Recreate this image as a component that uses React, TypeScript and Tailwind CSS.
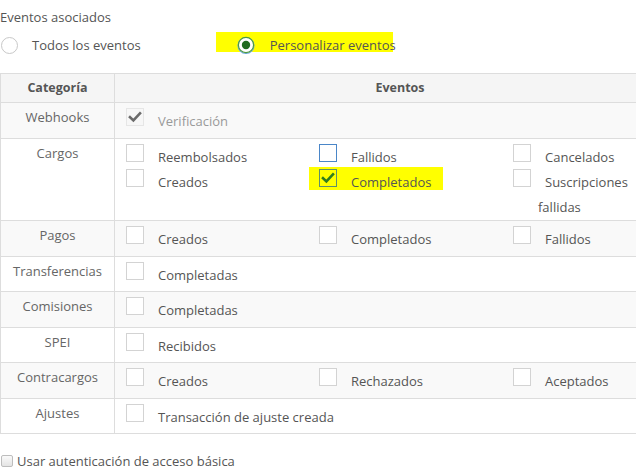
import React from 'react';

type Item = { label: string; state?: 'off' | 'on' | 'disabled' | 'hover'; mark?: boolean };

const Check = ({ color }: { color: string }) => (
  <svg width="14" height="14" viewBox="0 0 14 14" className="block">
    <path d="M2 7.2 L5.4 10.4 L12 3.4" fill="none" stroke={color} strokeWidth="2.6" strokeLinecap="square" />
  </svg>
);

const Box = ({ state = 'off' }: { state?: Item['state'] }) => {
  if (state === 'disabled') {
    return (
      <span className="w-[18px] h-[18px] shrink-0 border border-[#e6e6e6] bg-[#f7f7f7] flex items-center justify-center">
        <Check color="#6b6b6b" />
      </span>
    );
  }
  if (state === 'on') {
    return (
      <span className="w-[18px] h-[18px] shrink-0 border border-[#5f8f6a] flex items-center justify-center">
        <Check color="#2f7d1e" />
      </span>
    );
  }
  return (
    <span
      className={`w-[18px] h-[18px] shrink-0 border bg-white ${
        state === 'hover' ? 'border-[#4a86c8]' : 'border-[#d3d3d3]'
      }`}
    ></span>
  );
};

const Option = ({ item }: { item: Item }) => {
  const box = (
    <>
      <Box state={item.state} />
      <span
        className={`ml-[14px] mt-[3px] leading-[20px] whitespace-nowrap ${
          item.state === 'disabled' ? 'text-[#9a9a9a]' : 'text-[#555]'
        }`}
      >
        {item.label}
      </span>
    </>
  );
  if (item.mark) {
    return (
      <div className="h-[25px]">
        <div className="flex items-start bg-[#ffff00] w-[134px] -ml-[10px] pl-[10px] -mt-[2px] pt-[2px] h-[23px]">{box}</div>
      </div>
    );
  }
  return <div className="flex items-start h-[25px]">{box}</div>;
};

const rows: { cat: string; items: Item[] }[] = [
  { cat: 'Webhooks', items: [{ label: 'Verificación', state: 'disabled' }] },
  { cat: 'Pagos', items: [{ label: 'Creados' }, { label: 'Completados' }, { label: 'Fallidos' }] },
  { cat: 'Transferencias', items: [{ label: 'Completadas' }] },
  { cat: 'Comisiones', items: [{ label: 'Completadas' }] },
  { cat: 'SPEI', items: [{ label: 'Recibidos' }] },
  { cat: 'Contracargos', items: [{ label: 'Creados' }, { label: 'Rechazados' }, { label: 'Aceptados' }] },
  { cat: 'Ajustes', items: [{ label: 'Transacción de ajuste creada' }] },
];

const Row = ({ cat, striped, children }: { cat: string; striped: boolean; children: React.ReactNode }) => (
  <tr className={striped ? 'bg-[#f9f9f9]' : 'bg-white'}>
    <td className="border border-[#dddddd] align-top text-center pt-[5px] leading-[18px] text-[#666]">{cat}</td>
    <td className="border border-[#dddddd] align-top pl-[11px] pt-[5px] pb-[4.5px]">{children}</td>
  </tr>
);

const Grid = ({ items }: { items: Item[] }) => (
  <div className="grid grid-cols-[193px_194px_1fr]">
    {items.map((it, i) => (
      <Option key={i} item={it} />
    ))}
  </div>
);

export default function App() {
  return (
    <div
      className="w-[636px] h-[472px] overflow-hidden bg-white text-[13px] text-[#555]"
      style={{ fontFamily: '"Open Sans", "Liberation Sans", sans-serif' }}
    >
      <div className="pt-[8px] leading-[18px]">Eventos asociados</div>

      <div className="flex items-start h-[20px] mt-[6px]">
        <div className="flex items-start shrink-0">
          <span className="mt-[5px] ml-[1px] w-[17px] h-[17px] rounded-full border border-[#c8c8c8] bg-white"></span>
          <span className="ml-[14px] mt-[4px] leading-[18px] whitespace-nowrap">Todos los eventos</span>
        </div>
        <div className="ml-[75px] w-[177px] shrink-0 h-[20px] bg-[#ffff00] flex items-start pl-[20px]">
          <svg width="20" height="20" viewBox="0 0 20 20" className="mt-[4px] block shrink-0">
            <circle cx="10" cy="9.5" r="8" fill="#fff" stroke="#6aa8e0" strokeWidth="1.2" />
            <circle cx="10" cy="9" r="7.6" fill="#fff" stroke="#4f9a3f" strokeWidth="1.2" />
            <circle cx="10" cy="9" r="4.2" fill="#1f6a1f" />
          </svg>
          <span className="ml-[14px] mt-[4px] leading-[18px] text-[#555] whitespace-nowrap">Personalizar eventos</span>
        </div>
      </div>

      <table className="mt-[21px] w-[686px] table-fixed border-collapse">
        <colgroup>
          <col className="w-[114px]" />
          <col />
        </colgroup>
        <thead>
          <tr className="bg-[#f5f5f5]">
            <th className="border border-[#dddddd] h-[29px] text-center font-bold text-[12.5px] text-[#555]">Categoría</th>
            <th className="border border-[#dddddd] h-[29px] text-center font-bold text-[12.5px] text-[#555]">Eventos</th>
          </tr>
        </thead>
        <tbody>
          <Row cat={rows[0].cat} striped>
            <Grid items={rows[0].items} />
          </Row>
          <Row cat="Cargos" striped={false}>
            <div className="grid grid-cols-[193px_194px_1fr]">
              <Option item={{ label: 'Reembolsados' }} />
              <Option item={{ label: 'Fallidos', state: 'hover' }} />
              <Option item={{ label: 'Cancelados' }} />
              <Option item={{ label: 'Creados' }} />
              <Option item={{ label: 'Completados', state: 'on', mark: true }} />
              <div>
                <Option item={{ label: 'Suscripciones' }} />
                <div className="ml-[25px] mt-[3px] leading-[20px] h-[19px]">fallidas</div>
              </div>
            </div>
          </Row>
          {rows.slice(1).map((r, i) => (
            <Row key={r.cat} cat={r.cat} striped={i % 2 === 0}>
              <Grid items={r.items} />
            </Row>
          ))}
        </tbody>
      </table>

      <div className="mt-[18px] flex items-center">
        <span className="ml-[1px] w-[12px] h-[12px] rounded-[2px] border border-[#bdbdbd] bg-gradient-to-b from-[#fafafa] to-[#e4e4e4]"></span>
        <span className="ml-[4px] leading-[18px]">Usar autenticación de acceso básica</span>
      </div>
    </div>
  );
}
